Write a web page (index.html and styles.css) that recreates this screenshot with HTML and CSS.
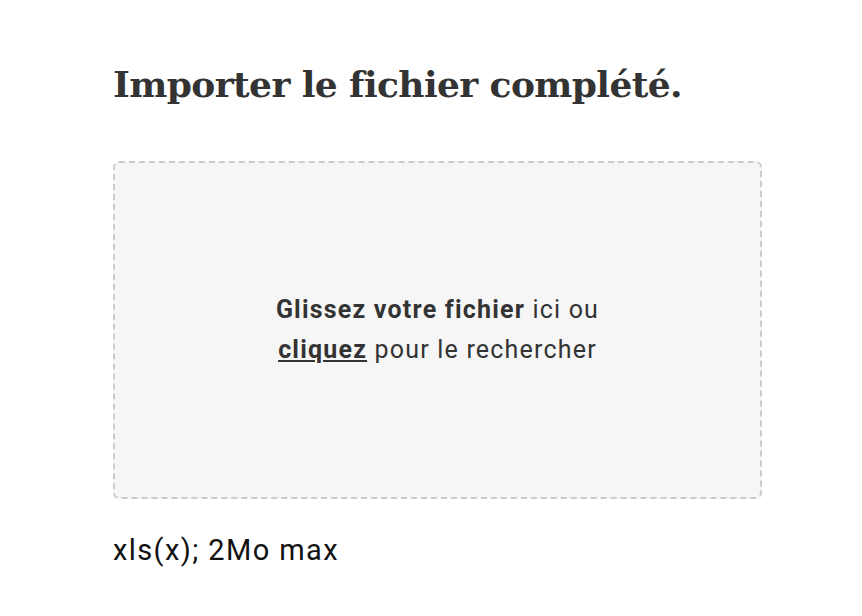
FILE: index.html
```html
<!DOCTYPE html>
<html lang="fr">
<head>
    <meta charset="UTF-8">
    <title>Importer le fichier</title>
    <link rel="stylesheet" href="styles.css">
</head>
<body>
<div class="page">
    <h1 class="title">Importer le fichier complété.</h1>
    <div class="drop">
        <p class="drop-text"><b>Glissez votre fichier</b> ici ou<br><a href="#" class="pick">cliquez</a> pour le rechercher</p>
    </div>
    <p class="hint">xls(x); 2Mo max</p>
</div>
</body>
</html>
```

FILE: styles.css
```css
body{margin:0;background:#fff;color:#333;font-family:Roboto,"Liberation Sans",sans-serif;}
.page{width:649px;padding:56px 0 0 113px;}
.title{margin:0;font-family:"DejaVu Serif",serif;font-weight:bold;font-size:36px;line-height:56px;color:#333;letter-spacing:-0.6px;}
.drop{margin-top:49px;height:334px;border:2px dashed #ccc;border-radius:6px;background:#f6f6f6;display:flex;align-items:center;justify-content:center;}
.drop-text{margin:0;text-align:center;font-size:25px;line-height:40px;letter-spacing:1.2px;color:#333;}
.drop-text b{font-weight:bold;}
.pick{color:#333;font-weight:bold;text-decoration:underline;}
.hint{margin:31px 0 0;font-size:29px;line-height:40px;letter-spacing:1.4px;color:#111;}
```
